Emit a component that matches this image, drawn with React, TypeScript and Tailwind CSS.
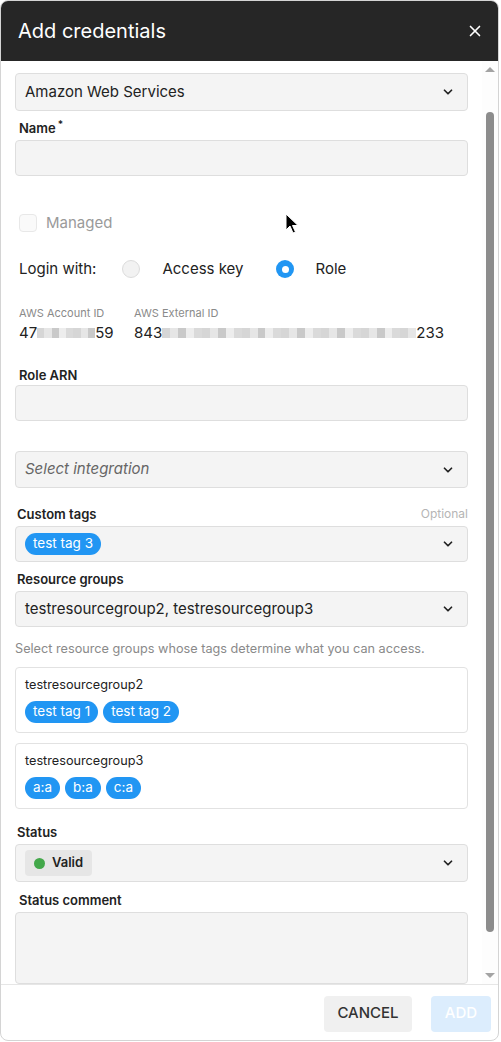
import { X, ChevronDown } from "lucide-react"

const font = { fontFamily: "Inter, 'Noto Sans', sans-serif" }

function Chip({ label }: { label: string }) {
  return (
    <span className="inline-flex h-[22px] items-center rounded-full bg-[#2196f3] px-[8px] text-[13.5px] leading-none text-white">
      {label}
    </span>
  )
}

function Label({ children, className = "" }: { children: React.ReactNode; className?: string }) {
  return <div className={`h-4 text-[13px] font-semibold leading-4 text-[#222] ${className}`}>{children}</div>
}

function Select({ children, className = "" }: { children?: React.ReactNode; className?: string }) {
  return (
    <div className={`flex items-center justify-between rounded-[4px] border border-[#dedede] bg-[#f4f4f4] pl-[9px] pr-[12px] ${className}`}>
      <div className="flex items-center">{children}</div>
      <ChevronDown size={14} strokeWidth={3} className="text-[#222]" />
    </div>
  )
}

function Blur({ w }: { w: number }) {
  // pixelated redaction blocks
  const blocks = Array.from({ length: Math.ceil(w / 8) })
  return (
    <span className="inline-flex h-[14px] items-center align-middle" style={{ width: w }}>
      {blocks.map((_, i) => (
        <span
          key={i}
          className="h-[10px] flex-1"
          style={{ background: ["#d6d6d6", "#e6e6e6", "#c9c9c9", "#ededed", "#dadada"][i % 5] }}
        />
      ))}
    </span>
  )
}

export default function App() {
  return (
    <div className="relative h-[1042px] w-[501px] overflow-hidden bg-white" style={font}>
      <div className="flex h-[1041px] w-[499px] flex-col overflow-hidden rounded-lg border border-[#d4d4d4] bg-white">
        {/* header */}
        <div className="flex h-[60px] shrink-0 items-center justify-between bg-[#262626] pl-[17px] pr-[14px]">
          <h1 className="text-[20px] font-normal text-white">Add credentials</h1>
          <X size={18} strokeWidth={2.2} className="text-white" />
        </div>

        {/* body */}
        <div className="flex min-h-0 flex-1">
          <div className="min-w-0 flex-1 overflow-hidden px-[14px]">
            <Select className="mt-[12px] h-[38px]">
              <span className="text-[15px] text-[#222]">Amazon Web Services</span>
            </Select>

            <Label className="mt-[9px] pl-[4px]">
              Name<sup className="ml-[2px] text-[10px]">*</sup>
            </Label>
            <div className="mt-[4px] h-[36px] rounded-[4px] border border-[#dedede] bg-[#f4f4f4]" />

            <div className="mt-[37px] flex h-[20px] items-center pl-[4px]">
              <span className="h-[18px] w-[18px] rounded-[4px] border border-[#e8e8e8] bg-[#fafafa]" />
              <span className="ml-[9px] text-[15px] text-[#9a9a9a]">Managed</span>
            </div>

            <div className="mt-[26px] flex h-[20px] items-center pl-[4px] text-[15px] text-[#222]">
              <span>Login with:</span>
              <span className="ml-[26px] h-[18px] w-[18px] rounded-full border border-[#dcdcdc] bg-[#f2f2f2]" />
              <span className="ml-[22px]">Access key</span>
              <span className="ml-[33px] flex h-[18px] w-[18px] items-center justify-center rounded-full bg-[#2196f3]">
                <span className="h-[7px] w-[7px] rounded-full bg-white" />
              </span>
              <span className="ml-[21px]">Role</span>
            </div>

            <div className="mt-[27px] flex pl-[4px]">
              <div className="w-[115px]">
                <div className="h-[14px] text-[11px] leading-[14px] text-[#8a8a8a]">AWS Account ID</div>
                <div className="mt-[3px] flex h-[20px] items-center text-[15px] text-[#222]">
                  47<Blur w={58} />59
                </div>
              </div>
              <div>
                <div className="h-[14px] text-[11px] leading-[14px] text-[#8a8a8a]">AWS External ID</div>
                <div className="mt-[3px] flex h-[20px] items-center text-[15px] text-[#222]">
                  843<Blur w={254} />233
                </div>
              </div>
            </div>

            <Label className="mt-[24px] pl-[4px]">Role ARN</Label>
            <div className="mt-[2px] h-[36px] rounded-[4px] border border-[#dedede] bg-[#f4f4f4]" />

            <Select className="mt-[30px] h-[37px]">
              <span className="text-[15px] italic text-[#666]">Select integration</span>
            </Select>

            <div className="mt-[18px] flex h-4 items-center justify-between pl-[2px]">
              <Label>Custom tags</Label>
              <span className="text-[12px] text-[#b5b5b5]">Optional</span>
            </div>
            <Select className="mt-[4px] h-[36px]">
              <Chip label="test tag 3" />
            </Select>

            <Label className="mt-[9px] pl-[2px]">Resource groups</Label>
            <Select className="mt-[4px] h-[36px]">
              <span className="text-[15px] text-[#222]">testresourcegroup2, testresourcegroup3</span>
            </Select>

            <div className="mt-[14px] h-4 text-[12.7px] leading-4 text-[#8a8a8a]">
              Select resource groups whose tags determine what you can access.
            </div>

            <div className="mt-[10px] h-[66px] rounded-[4px] border border-[#e2e2e2] px-[9px] pt-[9px]">
              <div className="h-4 text-[12.7px] leading-4 text-[#222]">testresourcegroup2</div>
              <div className="mt-[8px] flex gap-[5px]">
                <Chip label="test tag 1" />
                <Chip label="test tag 2" />
              </div>
            </div>

            <div className="mt-[10px] h-[66px] rounded-[4px] border border-[#e2e2e2] px-[9px] pt-[9px]">
              <div className="h-4 text-[12.7px] leading-4 text-[#222]">testresourcegroup3</div>
              <div className="mt-[8px] flex gap-[5px]">
                <Chip label="a:a" />
                <Chip label="b:a" />
                <Chip label="c:a" />
              </div>
            </div>

            <Label className="mt-[15px] pl-[2px]">Status</Label>
            <Select className="mt-[4px] h-[38px]">
              <span className="flex h-[26px] items-center gap-[7px] rounded-[4px] bg-[#e6e6e6] pl-[9px] pr-[9px] text-[13px] font-semibold text-[#222]">
                <span className="h-[11px] w-[11px] rounded-full bg-[#43a84a]" />
                Valid
              </span>
            </Select>

            <Label className="mt-[10px] pl-[4px]">Status comment</Label>
            <div className="mt-[4px] h-[72px] rounded-[4px] border border-[#dedede] bg-[#f4f4f4]" />
          </div>

          {/* scrollbar */}
          <div className="flex w-[16px] shrink-0 flex-col items-center bg-[#fdfdfd] pt-[6px] pb-[6px]">
            <span className="h-0 w-0 border-x-[5px] border-b-[5px] border-x-transparent border-b-[#a3a3a3]" />
            <div className="mt-[40px] h-[820px] w-[8px] rounded-full bg-[#8c8c8c]" />
            <div className="flex-1" />
            <span className="h-0 w-0 border-x-[5px] border-t-[5px] border-x-transparent border-t-[#a3a3a3]" />
          </div>
        </div>

        {/* footer */}
        <div className="flex h-[56px] shrink-0 items-center justify-end gap-[19px] border-t border-[#e6e6e6] pr-[7px] pt-[2px]">
          <button className="h-[36px] w-[88px] rounded-[4px] bg-[#f0f0f0] text-[15px] font-medium text-[#333]">
            CANCEL
          </button>
          <button className="h-[36px] w-[60px] rounded-[4px] bg-[#dcedfd] text-[15px] font-medium text-white">
            ADD
          </button>
        </div>
      </div>

      {/* mouse pointer */}
      <svg className="absolute left-[285px] top-[213px]" width="14" height="22" viewBox="0 0 14 22">
        <path d="M1 1 L1 17 L5 13 L8 20 L10.5 19 L7.5 12.5 L13 12.5 Z" fill="#000" stroke="#fff" strokeWidth="1" />
      </svg>
    </div>
  )
}
